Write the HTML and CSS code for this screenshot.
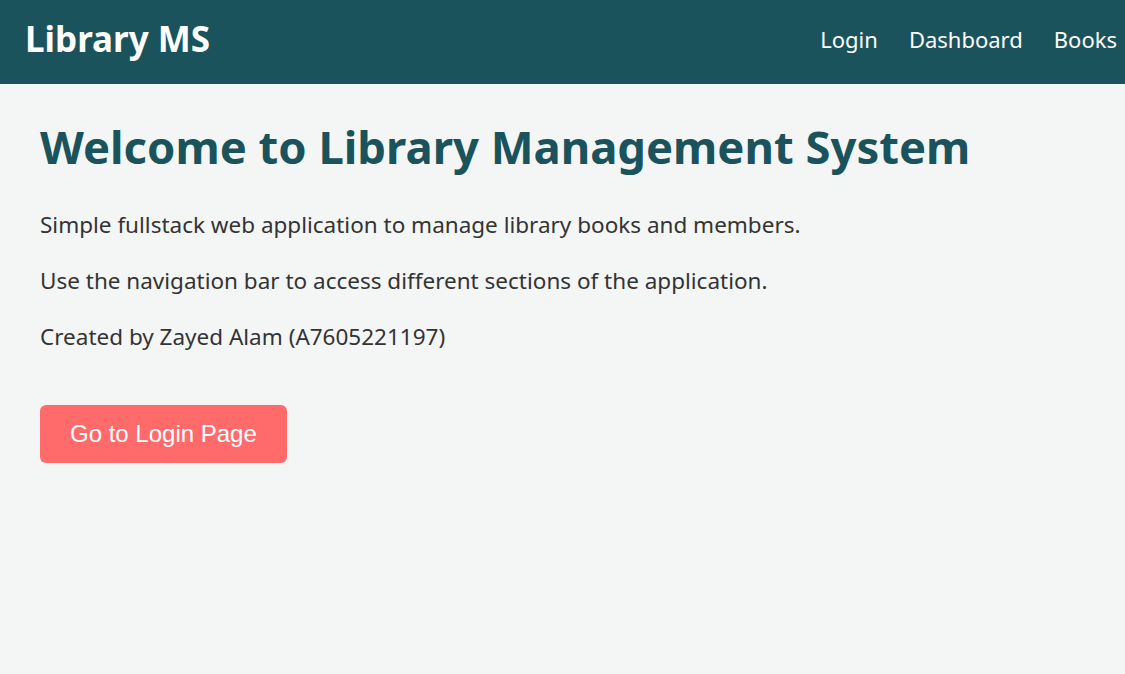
FILE: index.html
```html
<!DOCTYPE html>
<html lang="en">
<head>
<meta charset="utf-8">
<title>Library MS</title>
<link rel="stylesheet" href="styles.css">
</head>
<body>
<header class="navbar">
  <div class="brand">Library MS</div>
  <nav class="nav-links">
    <a href="#" class="nav-link">Login</a>
    <a href="#" class="nav-link">Dashboard</a>
    <a href="#" class="nav-link">Books</a>
  </nav>
</header>
<main class="content">
  <h1 class="title">Welcome to Library Management System</h1>
  <p class="text">Simple fullstack web application to manage library books and members.</p>
  <p class="text">Use the navigation bar to access different sections of the application.</p>
  <p class="text">Created by Zayed Alam (A7605221197)</p>
  <a href="#" class="btn">Go to Login Page</a>
</main>
</body>
</html>
```
FILE: styles.css
```css
* { box-sizing: border-box; }
html, body { margin: 0; padding: 0; }
body {
  background: #f4f6f6;
  color: #333;
  font-family: "Noto Sans", "Open Sans", sans-serif;
  font-size: 22.5px;
  min-height: 674px;
}
.navbar {
  background: #1a535c;
  height: 84px;
  display: flex;
  align-items: center;
  justify-content: space-between;
  padding: 0 8px 7px 25px;
}
.brand {
  color: #fff;
  font-size: 35px;
  font-weight: 700;
  line-height: 48px;
}
.nav-links {
  display: flex;
  gap: 31px;
}
.nav-link {
  color: #fff;
  text-decoration: none;
  font-size: 22px;
  line-height: 30px;
}
.content {
  padding: 30px 40px;
}
.title {
  color: #1a535c;
  font-size: 45.4px;
  font-weight: 700;
  line-height: 64px;
  margin: 0 0 31px;
}
.text {
  margin: 0 0 24px;
  line-height: 32px;
}
.btn {
  display: inline-block;
  margin-top: 28px;
  background: #ff6b6b;
  color: #fff;
  font-family: "Liberation Sans", Arial, sans-serif;
  font-size: 24px;
  padding: 15px 30px;
  border-radius: 6px;
  text-decoration: none;
  line-height: 28px;
}
```
